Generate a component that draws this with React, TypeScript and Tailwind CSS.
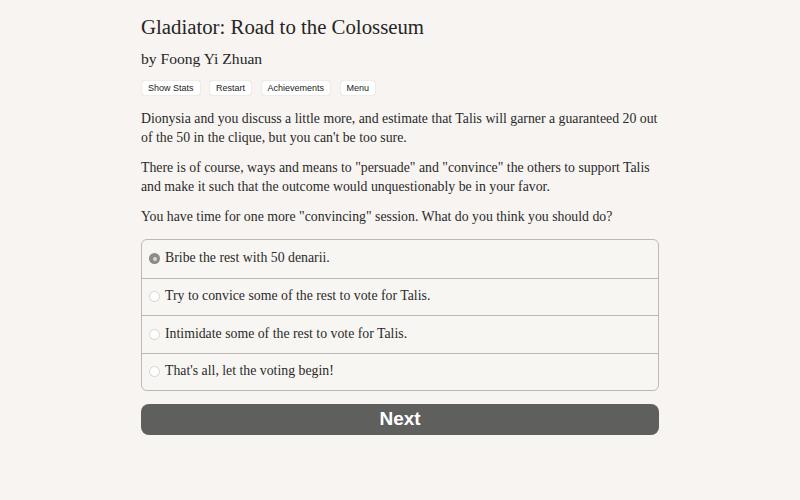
import React from "react";

const serif = { fontFamily: '"Liberation Serif", "DejaVu Serif", serif' };

function Radio({ checked }: { checked?: boolean }) {
  return checked ? (
    <span className="inline-flex w-[11px] h-[11px] rounded-full bg-[#8d8b89] items-center justify-center shrink-0">
      <span className="w-[4px] h-[4px] rounded-full bg-[#d9d6d3]" />
    </span>
  ) : (
    <span className="inline-block w-[11px] h-[11px] rounded-full bg-white border border-[#d6d3d0] shrink-0" />
  );
}

export default function App() {
  const choices = [
    "Bribe the rest with 50 denarii.",
    "Try to convice some of the rest to vote for Talis.",
    "Intimidate some of the rest to vote for Talis.",
    "That's all, let the voting begin!",
  ];
  return (
    <div className="w-[800px] h-[500px] bg-[#f7f4f1] text-[#2a2a2a] overflow-hidden">
      <div className="w-[518px] ml-[141px] pt-[12px]" style={serif}>
        <h1 className="text-[20.8px] leading-[30px] text-[#262626]">Gladiator: Road to the Colosseum</h1>
        <div className="text-[15.6px] leading-[22px] mt-[6px] text-[#262626]">by Foong Yi Zhuan</div>
        <div className="flex gap-[10.5px] mt-[11px] ml-[1px]" style={{ fontFamily: '"Liberation Sans", Arial, sans-serif' }}>
          {["Show Stats", "Restart", "Achievements", "Menu"].map((b) => (
            <span
              key={b}
              className="bg-white text-[9px] leading-[14px] px-[6px] rounded-[2px] text-[#222] shadow-[0_0_1px_rgba(0,0,0,0.35)]"
            >
              {b}
            </span>
          ))}
        </div>
        <div className="text-[13.8px] leading-[19px] mt-[14px] text-[#2a2a2a] whitespace-nowrap">
          <p>
            Dionysia and you discuss a little more, and estimate that Talis will garner a guaranteed 20 out
            <br />
            of the 50 in the clique, but you can't be too sure.
          </p>
          <p className="mt-[11px]">
            There is of course, ways and means to "persuade" and "convince" the others to support Talis
            <br />
            and make it such that the outcome would unquestionably be in your favor.
          </p>
          <p className="mt-[11px]">
            You have time for one more "convincing" session. What do you think you should do?
          </p>
        </div>
        <div className="mt-[13px] border border-[#bdbab6] rounded-[6px] bg-[#f8f6f3] overflow-hidden">
          {choices.map((c, i) => (
            <div
              key={c}
              className={`flex items-center gap-[5px] h-[37.5px] pl-[7px] text-[13.8px] ${i > 0 ? "border-t border-[#bdbab6]" : ""}`}
            >
              <Radio checked={i === 0} />
              <span>{c}</span>
            </div>
          ))}
        </div>
        <button
          className="mt-[13px] w-full h-[31px] rounded-[8px] bg-[#5f605e] text-white text-[19px] font-bold flex items-center justify-center"
          style={{ fontFamily: '"Liberation Sans", Arial, sans-serif' }}
        >
          Next
        </button>
      </div>
    </div>
  );
}
